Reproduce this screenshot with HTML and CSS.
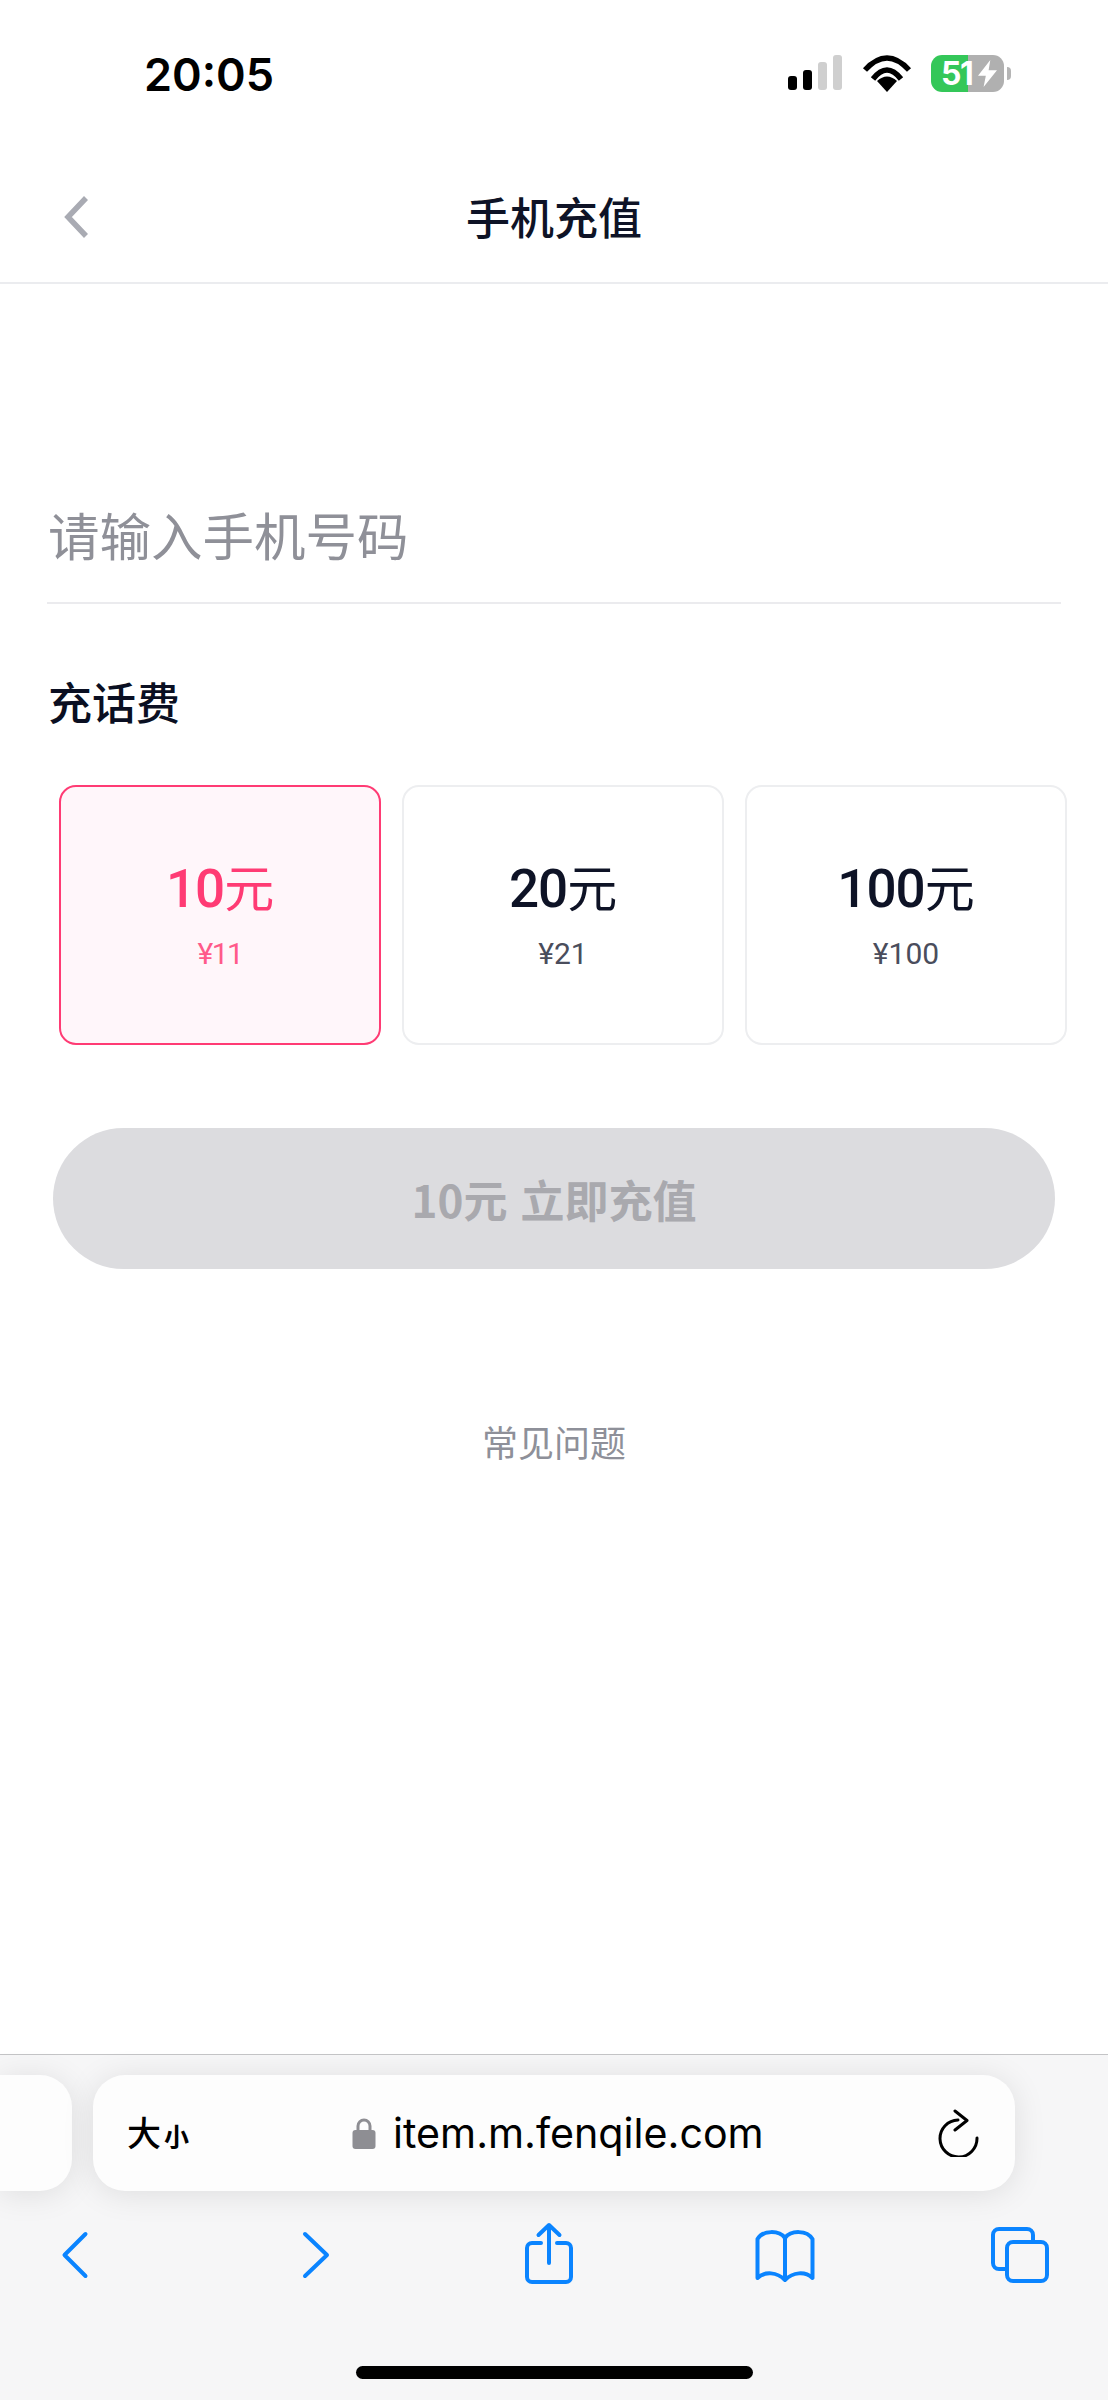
FILE: index.html
```html
<!DOCTYPE html>
<html lang="zh-CN">
<head>
<meta charset="utf-8">
<title>手机充值</title>
<link rel="stylesheet" href="styles.css">
</head>
<body>
<div class="screen">
  <header class="status">
    <span class="time">20:05</span>
    <div class="status-icons">
      <div class="signal">
        <i class="bar bar1"></i><i class="bar bar2"></i><i class="bar bar3"></i><i class="bar bar4"></i>
      </div>
      <svg class="wifi" viewBox="0 0 50 37" width="50" height="37">
        <path d="M3 15Q25-9 47 15M11 24Q25 6 39 24" fill="none" stroke="#000" stroke-width="5.5"/>
        <path d="M25 37L15 26Q25 17 35 26Z" fill="#000"/>
      </svg>
      <div class="battery">
        <span class="battery-num">51</span>
        <svg class="bolt" viewBox="0 0 17 24" width="19" height="27"><path d="M11 0L0 14H7L5 24L17 9H9.500Z" fill="#fff"/></svg>
      </div>
    </div>
  </header>

  <nav class="nav">
    <svg class="nav-back" viewBox="0 0 26 44" width="26" height="44"><path d="M23 3L5 22L23 41" fill="none" stroke="#a9abb3" stroke-width="5.500"/></svg>
    <h1 class="nav-title">手机充值</h1>
  </nav>

  <main class="content">
    <div class="phone-input">请输入手机号码</div>
    <h2 class="section-label">充话费</h2>
    <div class="cards">
      <div class="card card-active">
        <div class="amount"><span class="num">10</span>元</div>
        <div class="price">¥11</div>
      </div>
      <div class="card">
        <div class="amount"><span class="num">20</span>元</div>
        <div class="price">¥21</div>
      </div>
      <div class="card">
        <div class="amount"><span class="num">100</span>元</div>
        <div class="price">¥100</div>
      </div>
    </div>
    <div class="submit">10元 立即充值</div>
    <div class="faq">常见问题</div>
  </main>

  <footer class="toolbar">
    <div class="tabs-row">
      <div class="tab-peek"></div>
      <div class="address">
        <span class="text-size"><span class="big">大</span><span class="small">小</span></span>
        <div class="url">
          <svg class="lock" viewBox="0 0 24 32" width="24" height="32"><path d="M6 14V9a6 6 0 0 1 12 0v5" fill="none" stroke="#8e8e93" stroke-width="3"/><rect x="0.500" y="13" width="23" height="19" rx="3" fill="#8e8e93"/></svg>
          <span class="url-text">item.m.fenqile.com</span>
        </div>
        <svg class="reload" viewBox="0 0 44 48" width="44" height="48"><path d="M40 29A18.500 18.500 0 1 1 21 11M18 2L30 11.500L18 21" fill="none" stroke="#000" stroke-width="3" stroke-linecap="round" stroke-linejoin="round"/></svg>
      </div>
    </div>
    <div class="actions">
      <svg class="act" viewBox="0 0 60 68"><path d="M40.500 14L19.500 35L40.500 56"/></svg>
      <svg class="act" viewBox="0 0 60 68"><path d="M19 14L41 35L19 56"/></svg>
      <svg class="act" viewBox="0 0 60 68"><path d="M22 23H13a5 5 0 0 0-5 5V57a5 5 0 0 0 5 5H47a5 5 0 0 0 5-5V28a5 5 0 0 0-5-5H38M30 43V6M19.500 15L30 5L40.500 15"/></svg>
      <svg class="act" viewBox="0 0 60 68"><path d="M30 18C24 10 8 10 2.500 19V58C10 51 22 52 30 60C38 52 50 51 57.500 58V19C52 10 36 10 30 18ZM30 18V60"/></svg>
      <svg class="act" viewBox="0 0 60 68"><path d="M17 49H9a6 6 0 0 1-6-6V15a6 6 0 0 1 6-6H37a6 6 0 0 1 6 6V22"/><rect x="17" y="22" width="40" height="39" rx="6"/></svg>
    </div>
    <div class="home-wrap"><div class="home"></div></div>
  </footer>
</div>
</body>
</html>
```
FILE: styles.css
```css
* { box-sizing: border-box; margin: 0; padding: 0; }
html, body { background: #fff; }
body {
  font-family: "Noto Sans CJK SC", "Noto Sans", sans-serif;
}
.screen {
  width: 1108px;
  height: 2400px;
  display: flex;
  flex-direction: column;
  overflow: hidden;
}

/* status bar */
.status {
  height: 152px;
  display: flex;
  justify-content: space-between;
  align-items: flex-start;
  padding: 47px 104px 0 144px;
}
.time {
  font: 600 45px/56px "Inter", sans-serif;
  color: #000;
}
.status-icons {
  display: flex;
  align-items: flex-end;
  margin-top: 8px;
}
.signal {
  display: flex;
  align-items: flex-end;
  gap: 6px;
  height: 37px;
  padding-bottom: 2px;
}
.bar { display: block; width: 9px; border-radius: 3px; background: #cfcfcf; }
.bar1 { height: 14px; background: #000; }
.bar2 { height: 20px; background: #000; }
.bar3 { height: 28px; }
.bar4 { height: 35px; }
.wifi { margin-left: 20px; display: block; }
.battery {
  position: relative;
  width: 73px;
  height: 37px;
  margin-left: 19px;
  border-radius: 11px;
  background: linear-gradient(90deg, #34c759 37px, #b0b0b0 37px);
  display: flex;
  align-items: center;
  padding-left: 10px;
}
.battery::after {
  content: "";
  position: absolute;
  left: 76px;
  top: 12px;
  width: 4px;
  height: 13px;
  border-radius: 0 4px 4px 0;
  background: #b5b5b5;
}
.battery-num {
  font: 700 32px/37px "Inter", sans-serif;
  color: #fff;
  letter-spacing: -1.500px;
}
.bolt { margin-left: 6px; display: block; }

/* nav */
.nav {
  height: 132px;
  border-bottom: 2px solid #ebecef;
  position: relative;
  display: flex;
  align-items: center;
  justify-content: center;
}
.nav-back { position: absolute; left: 63px; top: 43px; }
.nav-title {
  font-size: 44px;
  line-height: 60px;
  margin-top: -2px;
  font-weight: 500;
  color: #0e1326;
}

/* content */
.content {
  flex: 1;
  padding: 0 47px;
}
.phone-input {
  margin-top: 215px;
  height: 105px;
  line-height: 70px;
  padding-left: 1px;
  font-size: 51.500px;
  color: #8f9098;
  border-bottom: 2px solid #ebebee;
}
.section-label {
  margin-top: 67px;
  padding-left: 1px;
  font-size: 44px;
  line-height: 60px;
  font-weight: 500;
  color: #0a0f22;
}
.cards {
  margin: 54px -41px 0 12px;
  display: flex;
  gap: 21px;
}
.card {
  width: 322px;
  height: 260px;
  border: 2px solid #edeef0;
  border-radius: 17px;
  padding-top: 68px;
  display: flex;
  flex-direction: column;
  align-items: center;
  gap: 15px;
  color: #0e1326;
}
.card-active {
  border-color: #ff3b74;
  background: #fff6fa;
  color: #ff3b74;
}
.amount {
  font-size: 50px;
  line-height: 60px;
  display: flex;
  align-items: baseline;
}
.num {
  font-family: "Roboto", sans-serif;
  font-weight: 500;
  font-size: 53px;
  letter-spacing: -1px;
}
.price {
  font-family: "Roboto", sans-serif;
  font-size: 30px;
  line-height: 40px;
  color: #4a4d5c;
}
.card-active .price { color: #ff5a8a; letter-spacing: -1.500px; }
.submit {
  margin: 83px 6px 0 6px;
  height: 141px;
  border-radius: 71px;
  background: #dcdcdf;
  color: #a9a9ae;
  font-size: 44px;
  font-weight: 700;
  word-spacing: 3px;
  display: flex;
  align-items: center;
  justify-content: center;
}
.faq {
  margin-top: 147px;
  text-align: center;
  font-size: 36px;
  line-height: 50px;
  color: #8e9099;
}

/* browser toolbar */
.toolbar {
  height: 346px;
  background: #f6f6f7;
  border-top: 1px solid #c4c4c6;
  display: flex;
  flex-direction: column;
}
.tabs-row {
  margin-top: 20px;
  display: flex;
  gap: 21px;
  height: 116px;
}
.tab-peek {
  width: 72px;
  border-radius: 0 32px 32px 0;
  background: #fdfdfd;
  box-shadow: 0 3px 32px rgba(0, 0, 0, 0.1);
}
.address {
  width: 922px;
  border-radius: 32px;
  background: #fdfdfd;
  box-shadow: 0 3px 32px rgba(0, 0, 0, 0.1);
  display: flex;
  align-items: center;
  padding: 0 34px;
  position: relative;
}
.text-size {
  display: flex;
  align-items: baseline;
  width: 225px;
  color: #000;
}
.big { font-size: 34px; line-height: 40px; font-weight: 500; }
.small { font-size: 25px; line-height: 40px; font-weight: 700; margin-left: 3px; }
.url { display: flex; align-items: center; gap: 17px; }
.lock { display: block; }
.url-text {
  font: 400 41.200px/60px "Inter", sans-serif;
  color: #000;
}
.reload { margin-left: auto; display: block; }
.actions {
  margin-top: 29px;
  display: grid;
  grid-template-columns: 241px 233px 236px 235px 60px;
  padding-left: 45px;
}
.act {
  width: 60px;
  height: 68px;
  display: block;
  fill: none;
  stroke: #0a84ff;
  stroke-width: 4;
  stroke-linecap: round;
  stroke-linejoin: round;
}
.home-wrap {
  margin-top: 78px;
  display: flex;
  justify-content: center;
}
.home {
  width: 397px;
  height: 13px;
  border-radius: 7px;
  background: #000;
}
```
